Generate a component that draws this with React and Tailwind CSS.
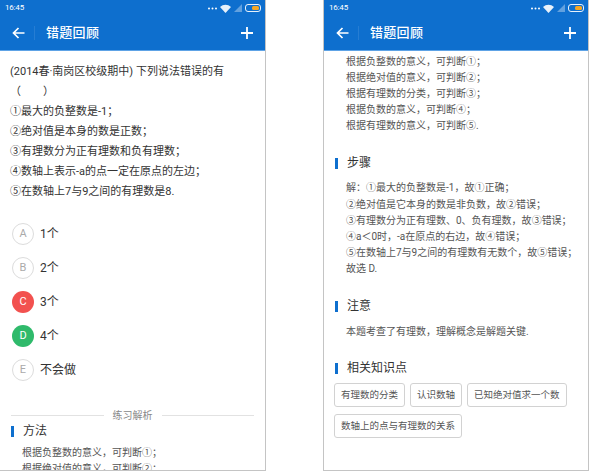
import React from 'react';

const question = [
  '(2014春·南岗区校级期中) 下列说法错误的有',
  '（　　）',
  '①最大的负整数是-1；',
  '②绝对值是本身的数是正数；',
  '③有理数分为正有理数和负有理数；',
  '④数轴上表示-a的点一定在原点的左边；',
  '⑤在数轴上7与9之间的有理数是8.',
];

const options = [
  { key: 'A', text: '1个', state: 'none' },
  { key: 'B', text: '2个', state: 'none' },
  { key: 'C', text: '3个', state: 'wrong' },
  { key: 'D', text: '4个', state: 'right' },
  { key: 'E', text: '不会做', state: 'none' },
];

const methodLines = [
  '根据负整数的意义，可判断①；',
  '根据绝对值的意义，可判断②；',
  '根据有理数的分类，可判断③；',
  '根据负数的意义，可判断④；',
  '根据有理数的意义，可判断⑤.',
];

const stepLines = [
  '解：①最大的负整数是-1，故①正确；',
  '②绝对值是它本身的数是非负数，故②错误；',
  '③有理数分为正有理数、0、负有理数，故③错误；',
  '④a＜0时，-a在原点的右边，故④错误；',
  '⑤在数轴上7与9之间的有理数有无数个，故⑤错误；',
  '故选 D.',
];

const tags = [['有理数的分类', '认识数轴', '已知绝对值求一个数'], ['数轴上的点与有理数的关系']];

// circled numbers are full width in the screenshot
function fmt(s) {
  return s.split(/([①②③④⑤])/).map((part, i) =>
    /[①②③④⑤]/.test(part) ? (
      <span key={i} className="inline-block w-[1em] text-center">{part}</span>
    ) : (
      part
    )
  );
}

function StatusBar() {
  return (
    <div className="h-[16px] flex items-center justify-between pl-[5px] pr-[4px] text-white">
      <span className="text-[8px] leading-none tracking-tight">16:45</span>
      <div className="flex items-center gap-[3px]">
        <svg width="9" height="4" viewBox="0 0 9 4">
          <circle cx="1" cy="2.5" r="1" fill="white" />
          <circle cx="4.5" cy="2.5" r="1" fill="white" />
          <circle cx="8" cy="2.5" r="1" fill="white" />
        </svg>
        <svg width="11" height="9" viewBox="0 0 11 9">
          <path d="M0 3 A8 8 0 0 1 11 3 L5.5 9 Z" fill="white" fillOpacity="0.9" />
        </svg>
        <svg width="8" height="8" viewBox="0 0 8 8">
          <path d="M8 0 L8 8 L0 8 Z" fill="white" fillOpacity="0.35" />
        </svg>
        <div className="w-[16px] h-[8px] rounded-[3px] border border-white/90 p-[1px] flex justify-end">
          <div className="w-[7px] h-full rounded-[1.5px] bg-[#f5a623]" />
        </div>
      </div>
    </div>
  );
}

function Header() {
  return (
    <div className="bg-[#0e6fce]">
      <StatusBar />
      <div className="h-[34px] flex items-center text-white">
        <div className="w-[34px] flex justify-center pl-[2px]">
          <svg width="13" height="12" viewBox="0 0 13 12" fill="none" stroke="white" strokeWidth="1.7">
            <path d="M12.5 6 H1.5 M6.5 1 L1.5 6 L6.5 11" />
          </svg>
        </div>
        <div className="w-px h-[14px] bg-white/10" />
        <span className="ml-[11px] text-[13px] font-medium tracking-[0.3px]">错题回顾</span>
        <div className="ml-auto mr-[12px]">
          <svg width="12" height="12" viewBox="0 0 12 12" stroke="white" strokeWidth="1.8">
            <path d="M6 0 V12 M0 6 H12" />
          </svg>
        </div>
      </div>
      <div className="h-px bg-[#5ea3e6]" />
    </div>
  );
}

function Heading({ children, className = '' }) {
  return (
    <div className={`flex items-center h-[20px] pl-[11px] ${className}`}>
      <div className="w-[3px] h-[11px] bg-[#0e6fce]" />
      <span className="ml-[9px] text-[12px] text-[#333]">{children}</span>
    </div>
  );
}

function Lines({ lines, className = '' }) {
  return (
    <div className={`pl-[22px] text-[10px] leading-[16.1px] text-[#555] ${className}`}>
      {lines.map((l) => (
        <div key={l} className="whitespace-nowrap">{fmt(l)}</div>
      ))}
    </div>
  );
}

function Badge({ k, state }) {
  if (state === 'wrong')
    return <div className="w-[22px] h-[22px] rounded-full bg-[#f2514f] text-white flex items-center justify-center text-[11px]">{k}</div>;
  if (state === 'right')
    return <div className="w-[22px] h-[22px] rounded-full bg-[#2fba6b] text-white flex items-center justify-center text-[11px]">{k}</div>;
  return <div className="w-[22px] h-[22px] rounded-full border border-[#dcdcdc] text-[#aaa] flex items-center justify-center text-[11px]">{k}</div>;
}

function LeftPhone() {
  return (
    <div className="w-[266px] h-[471px] border-r border-b border-[#c4c4c4] overflow-hidden flex flex-col bg-white">
      <Header />
      <div className="pt-[11px] pl-[10px] text-[11px] leading-[20px] text-[#333]">
        {question.map((q) => (
          <div key={q} className="whitespace-nowrap">{fmt(q)}</div>
        ))}
      </div>
      <div className="mt-[15px] pl-[12px]">
        {options.map((o) => (
          <div key={o.key} className="h-[34px] flex items-center gap-[6px]">
            <Badge k={o.key} state={o.state} />
            <span className="text-[12px] text-[#333]">{o.text}</span>
          </div>
        ))}
      </div>
      <div className="mt-[21px] mx-[11px] flex items-center h-[14px] gap-[9px]">
        <div className="flex-1 h-px bg-[#e2e2e2]" />
        <span className="text-[10px] text-[#888]">练习解析</span>
        <div className="flex-1 h-px bg-[#e2e2e2]" />
      </div>
      <Heading>方法</Heading>
      <Lines lines={methodLines} className="mt-[5px]" />
    </div>
  );
}

function RightPhone() {
  return (
    <div className="w-[266px] h-[471px] border-l border-r border-b border-[#c4c4c4] overflow-hidden flex flex-col bg-white">
      <Header />
      <Lines lines={methodLines} className="pt-[3px]" />
      <Heading className="mt-[19px]">步骤</Heading>
      <Lines lines={stepLines} className="mt-[7px]" />
      <Heading className="mt-[19px]">注意</Heading>
      <Lines lines={['本题考查了有理数，理解概念是解题关键.']} className="mt-[8px]" />
      <Heading className="mt-[18px]">相关知识点</Heading>
      <div className="mt-[5px] pl-[10px] flex flex-col gap-[7px]">
        {tags.map((row, i) => (
          <div key={i} className="flex gap-[5px]">
            {row.map((t) => (
              <span key={t} className="h-[24px] px-[6px] flex items-center border border-[#d2d2d2] rounded-[3px] text-[9.5px] text-[#555] whitespace-nowrap">
                {t}
              </span>
            ))}
          </div>
        ))}
      </div>
    </div>
  );
}

export default function App() {
  return (
    <div className="w-[590px] h-[472px] bg-white flex gap-[57px] font-['Roboto','Noto_Sans_CJK_SC',sans-serif]">
      <LeftPhone />
      <RightPhone />
    </div>
  );
}
